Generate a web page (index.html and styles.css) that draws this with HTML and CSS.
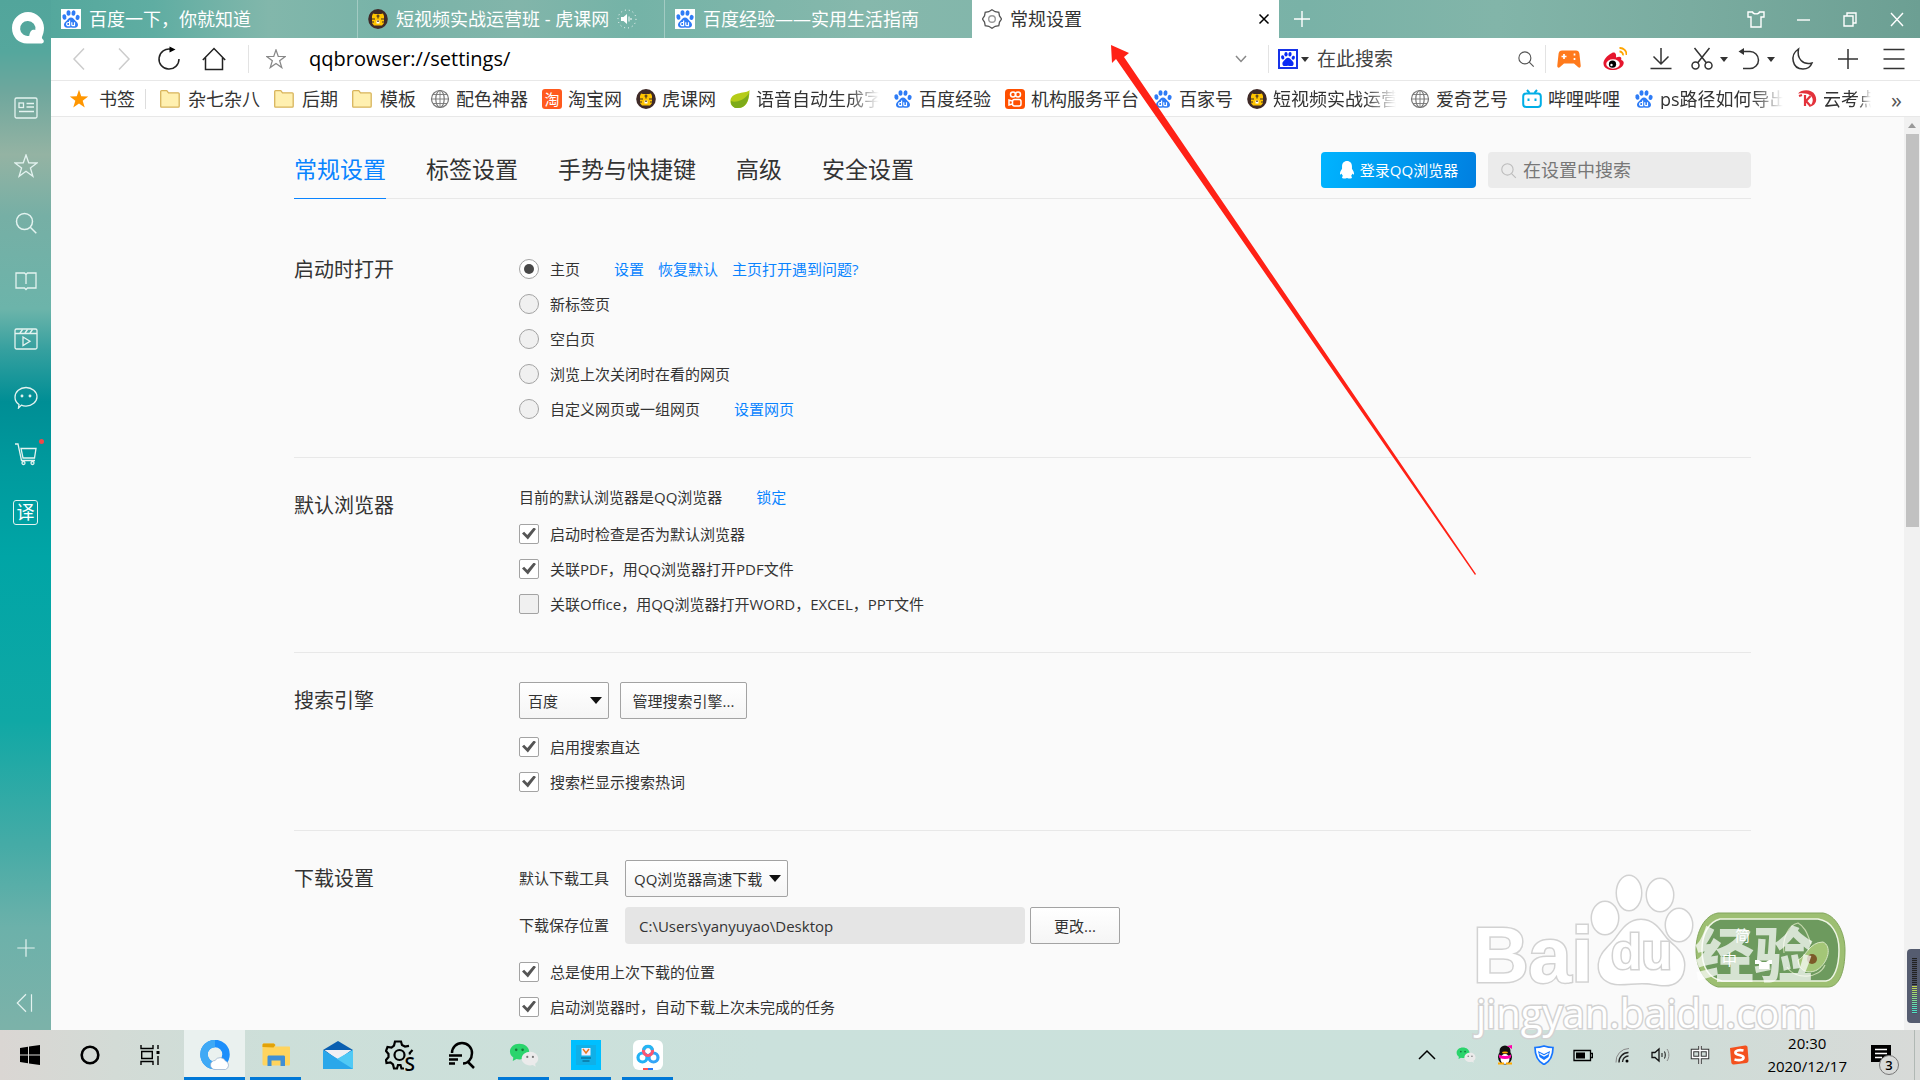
FILE: index.html
```html
<!DOCTYPE html>
<html lang="zh-CN">
<head>
  <meta charset="UTF-8" />
  <meta name="viewport" content="width=device-width, initial-scale=1.0" />
  <title>常规设置</title>
  <link rel="stylesheet" href="styles.css">
</head>
<body>
  <!-- shared icons -->
  <svg class="sprite" width="0" height="0" aria-hidden="true">
    <symbol id="paw" viewBox="0 0 20 20">
      <g fill="currentColor">
        <ellipse cx="3.4" cy="8" rx="2" ry="2.7" transform="rotate(-12 3.4 8)"/>
        <ellipse cx="7.5" cy="4" rx="2" ry="2.8"/>
        <ellipse cx="12.5" cy="4" rx="2" ry="2.8" transform="rotate(8 12.5 4)"/>
        <ellipse cx="16.6" cy="8.4" rx="2" ry="2.6" transform="rotate(14 16.6 8.4)"/>
        <path d="M10 8.4c2 0 3 1.6 4.2 3 1.300 1.400 3 2.500 2.800 4.700-.2 2-1.800 2.900-3.500 2.700-1.200-.1-2.200-.4-3.500-.4s-2.300.3-3.500.4c-1.700.2-3.300-.7-3.500-2.700-.2-2.200 1.500-3.300 2.800-4.700 1.200-1.400 2.200-3 4.200-3z"/>
      </g>
    </symbol>
    <symbol id="baidu" viewBox="0 0 20 20">
      <use href="#paw"/>
      <path d="M8.600 11.500v5.200H7.200a1.500 1.500 0 0 1 0-3.200h1.400M10.800 13.300v2.400c0 .7.4 1 1 1h1.700v-3.400" fill="none" stroke="#fff" stroke-width="1.200"/>
    </symbol>
    <symbol id="tiger" viewBox="0 0 20 20">
      <ellipse cx="10" cy="10" rx="9.800" ry="10" fill="#3f2a28"/>
      <path d="M5 4.500l2 .5h6l2-.500 1 2.500v7l-2 2.500H6L4 14V7z" fill="#ffc400"/>
      <path d="M10 5.500v4M8.500 7h3M4 10h3M13 10h3M4 13h2M14 13h2" stroke="#3f2a28" stroke-width="1.100"/>
      <rect x="8.500" y="11.500" width="3" height="3" fill="#fff"/>
      <rect x="9.300" y="11.500" width="1.400" height="1.500" fill="#3f2a28"/>
    </symbol>
    <symbol id="folder" viewBox="0 0 20 20">
      <path d="M.7 2.500c0-.6.3-.9.900-.9h5.200l1.700 2.200h9.800c.5 0 .9.400.9.900v12.600c0 .5-.4.900-.9.900H1.600c-.6 0-.9-.4-.9-.9z" fill="#fff0b0" stroke="#d8b45c" stroke-width="1.300"/>
    </symbol>
    <symbol id="globe" viewBox="0 0 20 20">
      <g fill="none" stroke="#777" stroke-width="1.200">
        <circle cx="10" cy="10" r="8.500"/><ellipse cx="10" cy="10" rx="4.200" ry="8.500"/>
        <path d="M10 1.500v17M1.500 10h17M3 5.500h14M3 14.500h14" stroke-width=".9"/>
      </g>
    </symbol>
    <symbol id="lens" viewBox="0 0 24 24">
      <g fill="none" stroke="currentColor" stroke-width="1.500"><circle cx="10.500" cy="10.500" r="8"/><path d="M16.300 16.300l6 6"/></g>
    </symbol>
    <symbol id="star" viewBox="0 0 24 24">
      <path d="M12 1l2.700 7.800 8.300.2-6.600 5 2.500 8.300L12 17.300l-6.900 5L7.600 14 1 9l8.300-.2z"/>
    </symbol>
    <symbol id="wechat" viewBox="0 0 32 26">
      <path d="M11 1C5.300 1 1 4.600 1 9.300c0 2.700 1.400 4.900 3.600 6.400L4 19.500l4-2.200c1 .2 2 .4 3 .4 5.600 0 10.500-3.700 10.500-8.400S16.700 1 11 1z" fill="#2bd46c"/>
      <circle cx="7.700" cy="7.500" r="1.400" fill="#167a3c"/><circle cx="14.500" cy="7.500" r="1.400" fill="#167a3c"/>
      <path d="M22.500 9.500c-5 0-9 3.300-9 7.300s4 7.300 9 7.300c1 0 2-.2 2.900-.4l3 1.800-.5-3.200c2-1.300 3.300-3.300 3.300-5.500 0-4-3.900-7.300-8.700-7.300z" fill="#ebebeb"/>
      <circle cx="19.500" cy="15" r="1.200" fill="#777"/><circle cx="25.500" cy="15" r="1.200" fill="#777"/>
    </symbol>
  </svg>

  <div class="desktop">
    <div class="browser">
      <aside class="sidebar">
        <a href="#" class="q-logo" aria-label="QQ浏览器">
          <svg width="34" height="34" viewBox="0 0 34 34"><path fill="#fff" fill-rule="evenodd" d="M17 1C8.500 1 1 8 1 17s6.500 15.500 15 15.500h14c3 0 3.500-2.500 2-4-.8-.8-1.300-1.500-1-2.500 1-2.500 2-5.500 2-9C33 8 25.500 1 17 1zm0 9a7.500 7.500 0 0 1 7.300 9c-2.300-1-5.300 0-6 5.800A7.500 7.500 0 1 1 17 10z"/></svg>
        </a>
        <nav class="side-nav">
          <a href="#" aria-label="资讯"><svg viewBox="0 0 24 24"><rect x="1" y="2" width="22" height="20" rx="1.500"/><rect x="5" y="7" width="4.500" height="4.500"/><path d="M12.500 7.500H20M12.500 11H20M5 15.500h15"/></svg></a>
          <a href="#" aria-label="收藏"><svg><use href="#star"/></svg></a>
          <a href="#" aria-label="搜索"><svg><use href="#lens"/></svg></a>
          <a href="#" aria-label="阅读"><svg viewBox="0 0 24 24"><path d="M2 4h8.500L12 5.500 13.500 4H22v15h-8.500L12 20.500 10.500 19H2zM12 5.500V15"/></svg></a>
          <a href="#" aria-label="视频"><svg viewBox="0 0 24 24"><rect x="1" y="2" width="22" height="20" rx="1.500"/><path d="M1 6.500h22M6 6l2.500-3.500M11 6l2.500-3.500M16 6l2.500-3.500M9 10l7 4.200-7 4.300z"/></svg></a>
          <a href="#" aria-label="聊天"><svg viewBox="0 0 24 24"><path d="M5 19.500c-2.500-1.700-4-4.300-4-7.200C1 6.800 6 2.500 12 2.500s11 4.300 11 9.300-5 9.300-11 9.300c-1.700 0-3.300-.3-4.700-.9L4.500 23z"/><circle cx="8" cy="11" r=".8"/><circle cx="16" cy="11" r=".8"/></svg></a>
          <a href="#" class="has-dot" aria-label="购物"><svg viewBox="0 0 24 24"><path d="M1 2h3l3.500 16.500H21M7 6.500h15L20.500 16H9z"/><circle cx="9.500" cy="21" r="1.500"/><circle cx="18.500" cy="21" r="1.500"/></svg></a>
          <a href="#"><span class="translate">译</span></a>
        </nav>
        <nav class="side-bottom">
          <a href="#" aria-label="添加"><svg viewBox="0 0 24 24"><path d="M12 2.500v19M2.500 12h19"/></svg></a>
          <a href="#" aria-label="收起"><svg viewBox="0 0 24 24"><path d="M12 2.500L2.500 12l9.500 9.500M18 2.500v19"/></svg></a>
        </nav>
      </aside>

      <div class="window">
        <header class="tabs">
          <div class="tab"><span class="fav"><svg><use href="#baidu"/></svg></span>百度一下，你就知道</div>
          <div class="tab"><svg class="fav-plain"><use href="#tiger"/></svg>短视频实战运营班 - 虎课网
            <svg class="sound" viewBox="0 0 20 20"><path d="M4 8h2.500L10 5v10l-3.500-3H4z" fill="#fff"/><path d="M12 7.500v5M14 9v2" stroke="#fff"/><circle cx="10" cy="10" r="9" fill="none" stroke="#fff" stroke-dasharray="1 3"/></svg>
          </div>
          <div class="tab"><span class="fav"><svg><use href="#baidu"/></svg></span>百度经验——实用生活指南</div>
          <div class="tab active">
            <svg class="fav-plain" viewBox="0 0 20 20" fill="none" stroke="#555"><path d="M10 .7l3.200 2 3.600.7.700 3.500 2 3.100-2 3.100-.7 3.500-3.600.7-3.200 2-3.200-2-3.600-.7-.7-3.500-2-3.100 2-3.100.7-3.500 3.600-.7z" stroke-width="1.300"/><circle cx="10" cy="10" r="3.300" stroke="#999" stroke-width="1.400"/></svg>常规设置
            <button class="tab-close" aria-label="关闭标签"><svg viewBox="0 0 12 12"><path d="M1.500 1.500l9 9M10.500 1.500l-9 9"/></svg></button>
          </div>
          <button class="new-tab" aria-label="新建标签"><svg viewBox="0 0 18 18"><path d="M9 1v16M1 9h16"/></svg></button>
          <div class="win-controls">
            <button aria-label="皮肤"><svg viewBox="0 0 18 18"><path d="M1 2h4.500c.5 2.500 6.500 2.500 7 0H17v5h-3v10H4V7H1z"/></svg></button>
            <button aria-label="最小化"><svg viewBox="0 0 18 18"><path d="M3 10h13"/></svg></button>
            <button aria-label="还原"><svg viewBox="0 0 18 18"><path d="M3 6h9v10H3zM6 6V3h9v10h-3"/></svg></button>
            <button aria-label="关闭"><svg viewBox="0 0 18 18"><path d="M3 3l12 13M15 3L3 16"/></svg></button>
          </div>
        </header>

        <div class="toolbar">
          <div class="nav-buttons">
            <button class="dim" aria-label="后退"><svg viewBox="0 0 24 24"><path d="M17 1.500L7 12l10 10.500"/></svg></button>
            <button class="dim" aria-label="前进"><svg viewBox="0 0 24 24"><path d="M7 1.500L17 12 7 22.500"/></svg></button>
            <button class="strong" aria-label="刷新"><svg viewBox="0 0 24 24"><path d="M14 2.300A10 10 0 1 0 22 12"/><path d="M12.500-.5v6l6-3z" fill="#000" stroke="none"/></svg></button>
            <button class="strong" aria-label="主页"><svg viewBox="0 0 24 24"><path d="M.8 13L12 1.500 23.200 13M3.500 10.500v12h17v-12"/></svg></button>
          </div>
          <div class="address">
            <svg class="addr-star"><use href="#star"/></svg>
            <input type="text" value="qqbrowser://settings/" aria-label="地址栏">
            <svg class="addr-arrow" viewBox="0 0 12 8"><path d="M1 1l5 5.500L11 1"/></svg>
          </div>
          <div class="web-search">
            <span class="engine"><svg><use href="#paw"/></svg></span><i class="caret"></i>
            <input type="text" placeholder="在此搜索" aria-label="在此搜索">
            <svg class="search-icon"><use href="#lens"/></svg>
          </div>
          <div class="tools">
            <button aria-label="游戏"><svg viewBox="0 0 24 24" class="solid"><path d="M5 3.500h14c2 0 3 1 3.400 3l1.300 12c.2 2-1.200 2.800-2.700 1.600l-4-3.600H7l-4 3.600C1.500 21.300.1 20.500.3 18.500l1.300-12c.4-2 1.400-3 3.400-3z" fill="#ff7a1c"/><path d="M4.500 9.500h5M7 7v5M17.500 6.500v2M17.500 11v2" stroke="#fff" stroke-width="1.700"/></svg></button>
            <button aria-label="微博"><svg viewBox="0 0 24 24" class="solid"><path d="M9 6C4 8.500 0 13 .5 17c.5 4.500 6 6.500 10.500 6 6-.6 10-4 9.700-7.500-.2-1.700-1.500-2.200-2.500-2.500.8-3-1.200-4.200-5.200-2.500.5-3-.5-6-4-4.500z" fill="#e6162d"/><ellipse cx="10" cy="17" rx="6.800" ry="4.700" fill="#fff"/><circle cx="9.500" cy="17.200" r="3.600" fill="#000"/><circle cx="8.500" cy="18" r="1.200" fill="#fff"/><path d="M16.500 1a6.500 6.500 0 0 1 7 7M16.500 4.500a3.500 3.500 0 0 1 3.500 3.800" stroke="#ffa500" stroke-width="1.800" fill="none"/></svg></button>
            <button aria-label="下载"><svg viewBox="0 0 24 24"><path d="M12 1v15.500M4.500 9.500l7.500 7.500 7.500-7.500M1.500 21.500h21"/></svg></button>
            <button aria-label="截图" class="wide"><svg viewBox="0 0 24 24"><path d="M4.500 1L16.500 16M19.500 1L7.500 16"/><circle cx="5.500" cy="18.500" r="3.500"/><circle cx="18.500" cy="18.500" r="3.500"/></svg><i class="caret"></i></button>
            <button aria-label="恢复"><svg viewBox="0 0 24 24"><path d="M5 4.500h8a8.500 8.500 0 0 1 0 17H6"/><path d="M7 1v7L1.500 4.500z" fill="#333" stroke="none"/></svg><i class="caret"></i></button>
            <button aria-label="夜间模式"><svg viewBox="0 0 24 24"><path d="M8.500 2C-.5 8 2 22 13 22c4 0 7.500-2 9-6C13 18.500 6.500 11.500 8.500 2z"/></svg></button>
            <button aria-label="添加"><svg viewBox="0 0 24 24"><path d="M12 2v20M2 12h20"/></svg></button>
            <button aria-label="菜单"><svg viewBox="0 0 24 24"><path d="M1.500 2.500h21M1.500 12h21M1.500 21.500h21"/></svg></button>
          </div>
        </div>

        <nav class="bookmarks">
          <a href="#" class="mark-home"><svg class="orange"><use href="#star"/></svg>书签</a>
          <a href="#" class="dir"><svg><use href="#folder"/></svg>杂七杂八</a>
          <a href="#" class="dir"><svg><use href="#folder"/></svg>后期</a>
          <a href="#" class="dir"><svg><use href="#folder"/></svg>模板</a>
          <a href="#"><svg><use href="#globe"/></svg>配色神器</a>
          <a href="#"><span class="taobao">淘</span>淘宝网</a>
          <a href="#"><svg><use href="#tiger"/></svg>虎课网</a>
          <a href="#"><svg viewBox="0 0 20 20"><path d="M19.500 1c-3 4-17 1-19 10-.7 4 2 7.500 6 8 9 1 13-6 13-18z" fill="#b5cc18"/><path d="M1 12c4 2 13 0 18-8-.5 9-4 16-13 15C2.500 18.500.500 15 1 12z" fill="#7dab1a"/></svg><span class="fade">语音自动生成字</span></a>
          <a href="#"><svg class="blue"><use href="#baidu"/></svg>百度经验</a>
          <a href="#"><svg viewBox="0 0 20 20"><rect width="20" height="20" rx="3.500" fill="#ff5000"/><g fill="none" stroke="#fff" stroke-width="1.500"><circle cx="8" cy="5.500" r="2.500"/><circle cx="13" cy="5.500" r="2.500"/><rect x="7.500" y="10.500" width="8.500" height="6.500" rx="2"/><path d="M7 12l-3-1v5l3-1"/></g></svg>机构服务平台</a>
          <a href="#"><svg class="blue"><use href="#baidu"/></svg>百家号</a>
          <a href="#"><svg><use href="#tiger"/></svg><span class="fade">短视频实战运营</span></a>
          <a href="#"><svg><use href="#globe"/></svg>爱奇艺号</a>
          <a href="#"><svg viewBox="0 0 20 20" fill="none" stroke="#00aee6" stroke-width="2"><rect x="1.200" y="4.500" width="17.600" height="13.500" rx="3"/><path d="M5 1l2.500 3M15 1l-2.500 3M6.500 9.500v2.500M13.500 9.500v2.500"/></svg>哔哩哔哩</a>
          <a href="#"><svg class="blue"><use href="#baidu"/></svg><span class="fade">ps路径如何导出</span></a>
          <a href="#"><svg viewBox="0 0 20 20"><path d="M1 4.500C5 0 15 0 18 6s0 11-6 12c4-3 5-8 2-11S6 4 1 4.500z" fill="#e3323b"/><path d="M8 6v11M13.500 7L9 12l4.500 5M2 7l3-1" stroke="#e3323b" stroke-width="2.200" fill="none"/></svg><span class="fade short">云考点</span></a>
          <button class="more" aria-label="更多书签">»</button>
        </nav>

        <div class="page">
          <main class="settings">
            <header class="settings-head">
              <nav class="settings-nav">
                <a href="#" class="current">常规设置</a>
                <a href="#">标签设置</a>
                <a href="#">手势与快捷键</a>
                <a href="#">高级</a>
                <a href="#">安全设置</a>
              </nav>
              <button class="login"><svg viewBox="0 0 16 20"><path d="M8 0c3.500 0 5.500 2.500 5.500 6v2.500c1.500 2 2.500 4.500 2.300 6-.3 1.200-1.300.3-1.800-.5-.2 1-.8 2-1.500 2.700 1.500.8 1.500 2.800-.8 2.800-1.500 0-2.700-.2-3.700-.7-1 .5-2.200.7-3.700.7-2.300 0-2.300-2-.8-2.800C2.800 16 2.200 15 2 14c-.5.800-1.500 1.700-1.800.5-.2-1.500.8-4 2.300-6V6C2.500 2.500 4.500 0 8 0z" fill="#fff"/></svg>登录QQ浏览器</button>
              <label class="find"><svg><use href="#lens"/></svg><input type="text" placeholder="在设置中搜索" aria-label="在设置中搜索"></label>
            </header>

            <section class="group first">
              <h2>启动时打开</h2>
              <div class="options">
                <div class="row"><label><input type="radio" name="startup" checked>主页</label><span class="links"><a href="#">设置</a><a href="#">恢复默认</a><a href="#">主页打开遇到问题?</a></span></div>
                <div class="row"><label><input type="radio" name="startup">新标签页</label></div>
                <div class="row"><label><input type="radio" name="startup">空白页</label></div>
                <div class="row"><label><input type="radio" name="startup">浏览上次关闭时在看的网页</label></div>
                <div class="row"><label><input type="radio" name="startup">自定义网页或一组网页</label><span class="links"><a href="#">设置网页</a></span></div>
              </div>
            </section>

            <section class="group">
              <h2>默认浏览器</h2>
              <div class="options">
                <div class="intro">目前的默认浏览器是QQ浏览器<span class="links"><a href="#">锁定</a></span></div>
                <div class="row"><label><input type="checkbox" checked>启动时检查是否为默认浏览器</label></div>
                <div class="row"><label><input type="checkbox" checked>关联PDF，用QQ浏览器打开PDF文件</label></div>
                <div class="row"><label><input type="checkbox">关联Office，用QQ浏览器打开WORD，EXCEL，PPT文件</label></div>
              </div>
            </section>

            <section class="group">
              <h2>搜索引擎</h2>
              <div class="options">
                <div class="controls">
                  <span class="select engine-select"><select aria-label="搜索引擎"><option>百度</option></select></span>
                  <button class="btn">管理搜索引擎...</button>
                </div>
                <div class="row"><label><input type="checkbox" checked>启用搜索直达</label></div>
                <div class="row"><label><input type="checkbox" checked>搜索栏显示搜索热词</label></div>
              </div>
            </section>

            <section class="group">
              <h2>下载设置</h2>
              <div class="options">
                <div class="field">
                  <label for="tool">默认下载工具</label>
                  <span class="select tool-select"><select id="tool"><option>QQ浏览器高速下载</option></select></span>
                </div>
                <div class="field">
                  <label for="path">下载保存位置</label>
                  <input type="text" id="path" value="C:\Users\yanyuyao\Desktop" readonly>
                  <button class="btn change">更改...</button>
                </div>
                <div class="row"><label><input type="checkbox" checked>总是使用上次下载的位置</label></div>
                <div class="row"><label><input type="checkbox" checked>启动浏览器时，自动下载上次未完成的任务</label></div>
              </div>
            </section>
          </main>
          <div class="scrollbar"><i class="up"></i><i class="thumb"></i></div>
        </div>
      </div>
    </div>

    <footer class="taskbar">
      <button class="sys" aria-label="开始"><svg width="20" height="20" viewBox="0 0 20 20"><path d="M0 3l8-1.200v7.700H0zM9 1.600L20 0v9.500H9zM0 10.500h8v7.700L0 17zM9 10.500h11V20L9 18.400z"/></svg></button>
      <button class="sys" aria-label="Cortana"><svg width="20" height="20" viewBox="0 0 20 20"><circle cx="10" cy="10" r="8.300" fill="none" stroke="#000" stroke-width="2.600"/></svg></button>
      <button class="sys" aria-label="任务视图"><svg width="20" height="20" viewBox="0 0 20 20" fill="none" stroke="#000" stroke-width="1.400"><path d="M1 0v3.500h12V0M1 20v-3.500h12V20M1.700 6.500h10.600v7H1.700zM18 0v4M18 11v9"/><path d="M18 6v3" stroke-width="3"/></svg></button>
      <div class="apps">
        <button class="on" aria-label="QQ浏览器"><svg viewBox="0 0 30 30"><circle cx="15" cy="14.500" r="11" fill="none" stroke="#1d8ffb" stroke-width="7.500"/><path d="M15 3.500A11 11 0 0 0 15 25.500" fill="none" stroke="#3fa9f5" stroke-width="7.500"/><path d="M15 29.500a4.500 4.500 0 0 1 0-9 6 6 0 0 1 10.500.5 4.500 4.500 0 0 1 0 8.500z" fill="#fff" stroke="#8fa9c9" stroke-width=".7"/></svg></button>
        <button class="open" aria-label="文件资源管理器"><svg viewBox="0 0 30 30"><path d="M1.500 5c0-1 .5-1.500 1.500-1.500h10l1.500 3H28c.7 0 1 .4 1 1V24c0 1-.5 1.500-1.500 1.500h-24c-1.300 0-2-.7-2-1.500z" fill="#ffd45e"/><path d="M1.500 7V5c0-1 .5-1.500 1.500-1.500h10l1.500 1.500-2 2.500z" fill="#e2a208"/><path d="M6.500 26V17c0-1 .6-1.500 1.500-1.500h14.500c1 0 1.500.5 1.500 1.500v9h-4.500v-5.500h-9V26z" fill="#3f8fd6"/></svg></button>
        <button aria-label="邮件"><svg viewBox="0 0 30 30"><path d="M0 10L15 1l15 9-15 11z" fill="#0a5fb0"/><path d="M1.500 10h27L15 20z" fill="#f0f0f4"/><path d="M0 10l15 9 15-9v19H0z" fill="#2aa7ea"/><path d="M30 10v19L14 19z" fill="#50c9f5"/></svg></button>
        <button aria-label="设置"><svg viewBox="0 0 30 30" fill="none" stroke="#000" stroke-width="2.200"><circle cx="14.500" cy="15" r="5"/><path d="M19 28.500h-2.500L15.500 25H13l-1 3.500H9l-1-4-2.500-2-4 .5L1 20l2.500-3v-3L1 11l1.500-4 4 .5L9 5.500 10 1.500h6l1 3.500 3 1.500 4-.7M27.500 10l-2.800 3 .3 1.500"/></svg><span class="s-mark">S</span></button>
        <button aria-label="搜索"><svg viewBox="0 0 30 30" fill="none" stroke="#000" stroke-width="2.500"><path d="M5 13A10 10 0 0 1 25 13c0 6-4 10.500-9 10.500M20.500 21.500l6.500 6.500M2 15.500h13M2 19.500h9M2 23.500h6"/></svg></button>
        <button class="open" aria-label="微信"><svg><use href="#wechat"/></svg></button>
        <button class="open" aria-label="应用"><svg viewBox="0 0 30 30"><path fill="#00bfff" d="M0 0h30v30H0z"/><path fill="#0fb0e8" d="M5 5h20v20H5z"/><path fill="#eef" d="M10.500 8h9v7.500h-9z"/><path d="M12 9l3 4 3-4" stroke="#e87a20" fill="none" stroke-width="1.500"/><path d="M10 18h10M11.500 21h7" stroke="#075b80"/></svg></button>
        <button class="open" aria-label="网盘"><svg viewBox="0 0 30 30"><rect width="30" height="30" rx="6" fill="#fff"/><g fill="none" stroke-width="3.200"><circle cx="9.500" cy="17.500" r="4.500" stroke="#22b2f5"/><circle cx="20.500" cy="17.500" r="4.500" stroke="#35a5f7"/><circle cx="15" cy="11" r="4.500" stroke="#ff5470"/><path d="M10.600 10a4.500 4.500 0 0 1 8.800 0" stroke="#25b7f5"/></g><path fill="#f55" d="M10 28h5v2h-5z"/><path fill="#2a7df5" d="M15 28h5v2h-5z"/></svg></button>
      </div>
      <div class="tray">
        <svg viewBox="0 0 20 20" fill="none" stroke="#000" stroke-width="1.500"><path d="M2 14l8-8 8 8"/></svg>
        <svg><use href="#wechat"/></svg>
        <svg viewBox="0 0 20 20"><ellipse cx="10" cy="12" rx="7" ry="7.500" fill="#111"/><circle cx="10" cy="6" r="5.500" fill="#111"/><ellipse cx="10" cy="14" rx="4.500" ry="5" fill="#fff"/><path d="M4 9.500c4 2 8 2 12 0v3c-4 2-8 2-12 0zM12 1l5-1v4z" fill="#f0a"/><ellipse cx="10" cy="7.500" rx="3" ry="1" fill="#fa0"/><path d="M3 18.500h6M11 18.500h6" stroke="#fa0" stroke-width="2"/></svg>
        <svg viewBox="0 0 20 20"><path d="M10 1c3 1 6 1.500 9 1.500C19 10 17 16 10 19.500 3 16 1 10 1 2.500 4 2.500 7 2 10 1z" fill="#fff" stroke="#1676ff" stroke-width="1.700"/><path d="M4 6l6 3 6-3-1.500 6L10 15l-4.500-3z" fill="#1676ff"/><path d="M5.500 8.500l4.500 2.500 4.500-2.500" fill="none" stroke="#fff" stroke-width="1.300"/></svg>
        <svg viewBox="0 0 20 20"><path d="M1 5.500h16.500v10H1zM18 8.500h1.500v4H18" fill="none" stroke="#000" stroke-width="1.300"/><path d="M3 7.500h9v6H3z"/></svg>
        <svg viewBox="0 0 20 20" fill="none" stroke="#222"><circle cx="15" cy="16" r="1.500" fill="#000" stroke="none"/><path d="M10.500 17a6 6 0 0 1 6-6M7 17.500A9.500 9.500 0 0 1 16.500 7.500" stroke-width="1.400"/><path d="M4 17.500A13 13 0 0 1 17 3.500" stroke="#888"/></svg>
        <svg viewBox="0 0 20 20" fill="none" stroke="#111"><path d="M1 7.500h3L8 4v12l-4-3.500H1z" stroke-width="1.300"/><path d="M11 8v4M13.500 6.500c1 2 1 5 0 7"/><path d="M16 4c2.500 3.500 2.500 8.500 0 12" stroke="#888"/></svg>
        <svg viewBox="0 0 20 20" fill="none"><path d="M2.500 5.500h15v7h-15zM10 1v18" stroke="#333" stroke-width="3.500"/><path d="M2.500 5.500h15v7h-15zM10 1v18" stroke="#fff" stroke-width="1.500"/></svg>
        <svg viewBox="0 0 20 20"><path d="M1 3l15-2.500c1.500 0 2.200.5 2.500 1.500l1 13c0 1.500-.5 2.500-2 3L5 19.500c-1.500 0-2.500-.5-2.700-2z" fill="#f4511e"/><path d="M14.500 5.500C10 4.500 6 5.500 6.500 8s8 1.500 8 4.500-5 3-9 2" fill="none" stroke="#fff" stroke-width="2.700"/></svg>
      </div>
      <div class="clock"><span>20:30</span><span>2020/12/17</span></div>
      <button class="notice" aria-label="通知"><svg viewBox="0 0 20 20"><path d="M0 0h20v17h-7l-4 3v-3H0z"/><path d="M4 4.500h12M4 8.500h12M4 12.500h7" stroke="#fff" stroke-width="1.300"/></svg><span>3</span></button>
    </footer>

    <!-- volume meter docked to the screen edge -->
    <div class="meter"><i></i></div>

    <svg class="watermark" viewBox="0 0 400 180" aria-hidden="true">
      <g class="wm-outline">
        <text x="3" y="114" class="wm-bold">Bai</text>
        <ellipse cx="135" cy="50" rx="13" ry="16"/><ellipse cx="159" cy="25" rx="12" ry="17"/><ellipse cx="190" cy="27" rx="13" ry="16"/><ellipse cx="209" cy="57" rx="13" ry="16"/>
        <path d="M171 52c12 0 18 9 24 17 7 9 19 14 19 28 0 15-10 21-22 20-8-1-12-2-20-2s-14 1-22 1c-13 0-22-7-21-20 1-12 12-18 18-27 6-8 12-17 24-17z"/>
        <text x="141" y="101" class="wm-du">du</text>
      </g>
      <path d="M248 45h105c12 2 22 18 22 37 0 22-6 37-17 37h-110c-12-3-22-18-22-37s9-35 22-37z" fill="#9dbf72" stroke="#82a65c"/>
      <path d="M250 51h98c13 2 21 14 21 31s-5 30-13 31H252c-13-3-20-14-20-31s7-28 18-31z" fill="#6d9a5e" stroke="#eef5e4" stroke-width="1.500"/>
      <g fill="none" stroke="#c5d8ad" stroke-width="1.200"><path d="M314 85c-2-14 4-28 14-30 6 3 9 9 13 21M317 99c8 13 32 12 38-2"/></g>
      <path d="M328 92c8-3 11-18 25-18 9 4 6 20-6 28-8 4-18 2-19-10z" fill="#a3c677" stroke="#d9e8c5"/><circle cx="342" cy="91" r="5" fill="#7c5a28"/>
      <text x="225" y="109" class="wm-cjk">经验</text>
      <text x="265" y="73" class="wm-small">简</text><text x="252" y="97" class="wm-small">中</text>
      <path d="M285 92h4l3 2h4l3-2h3v4h-3v5h-10v-5h-4z" fill="#fff"/>
      <text x="6" y="160" class="wm-url">jingyan.baidu.com</text>
    </svg>

    <svg class="arrow" viewBox="0 0 366 532" aria-hidden="true"><path d="M0 0l18 8-5 4 352 517-1 1L5 14l-4 4z" fill="#ff2116"/></svg>
  </div>
</body>
</html>
```

FILE: styles.css
```css
* {
  box-sizing: border-box;
}
body {
  margin: 0;
  font-family: "Open Sans", "Noto Sans CJK SC", sans-serif;
  font-size: 15px;
  line-height: 20px;
  color: #333;
}
a {
  color: inherit;
  text-decoration: none;
}
button, input, select {
  font: inherit;
  color: inherit;
}
button {
  padding: 0;
  border: 0;
  background: none;
}
svg {
  flex: none;
}
.sprite {
  position: absolute;
}
.desktop {
  position: relative;
  display: flex;
  flex-direction: column;
  height: 100vh;
  overflow: hidden;
}
.browser {
  flex: 1;
  display: flex;
  min-height: 0;
  background: linear-gradient(90deg, #4fa59a 0%, #5fada2 8%, #82b7ab 14%, #78b3a8 20%, #82b5aa 27%, #74b3a7 33%, #86b8ac 45%, #79b2a7 68%, #82b5a9 78%, #7aaca0 88%, #6c9f93 100%);
}

/* sidebar */
.sidebar {
  display: flex;
  flex-direction: column;
  width: 51px;
  background: linear-gradient(#52a59b 0%, #55a79d 5%, #6fa79d 9%, #94b3a3 15%, #76afa5 21%, #6cb4aa 30%, #35a09f 34%, #008e95 39%, #009b9e 46%, #00a5a6 54%, #10a8a5 70%, #45aba6 82%, #6cb1aa 90%, #7cb2a9 100%);
}
.q-logo {
  display: flex;
  justify-content: center;
  padding: 11px 0 0 4px;
  height: 79px;
}
.side-nav {
  display: flex;
  flex-direction: column;
  height: 462px;
}
.side-nav a {
  flex: 1;
}
.side-nav a, .side-bottom a {
  display: flex;
  align-items: center;
  justify-content: center;
  position: relative;
}
.side-bottom {
  margin-top: auto;
}
.side-bottom a {
  height: 55px;
}
.side-nav svg, .side-bottom svg {
  width: 24px;
  height: 24px;
  fill: none;
  stroke: #e4f3f0;
  stroke-width: 1.3;
  color: #e4f3f0;
}
.side-bottom svg {
  width: 22px;
  height: 22px;
}
.has-dot::after {
  content: "";
  position: absolute;
  top: 13px;
  right: 7px;
  width: 5px;
  height: 5px;
  border-radius: 50%;
  background: #f04848;
}
.translate {
  width: 25px;
  height: 25px;
  border: 1px solid #e4f3f0;
  border-radius: 3px;
  color: #fff;
  font-size: 18px;
  line-height: 22px;
  text-align: center;
}

/* tabs */
.window {
  flex: 1;
  display: flex;
  flex-direction: column;
  min-width: 0;
}
.tabs {
  display: flex;
  height: 38px;
  color: #fff;
  font-size: 18px;
}
.tab {
  display: flex;
  align-items: center;
  gap: 8px;
  flex: 0 1 307px;
  padding-left: 10px;
  border-right: 1px solid #a3cbc3;
  white-space: nowrap;
}
.tab:nth-child(3) {
  border-right: 0;
}
.tab.active {
  background: #fff;
  color: #333;
  border: 0;
}
.fav {
  width: 20px;
  height: 20px;
  background: #fff;
}
.fav svg {
  display: block;
  width: 20px;
  height: 20px;
  color: #2e7cf6;
}
.fav-plain, .sound {
  width: 20px;
  height: 20px;
}
.tab-close {
  display: flex;
  margin: 0 9px 0 auto;
}
.tab-close svg {
  width: 12px;
  height: 12px;
  stroke: #000;
  stroke-width: 1.5;
}
.new-tab {
  display: flex;
  align-items: center;
  justify-content: center;
  width: 46px;
}
.new-tab svg, .win-controls svg {
  width: 18px;
  height: 18px;
  fill: none;
  stroke: #fff;
  stroke-width: 1.4;
}
.win-controls {
  display: flex;
  margin-left: auto;
}
.win-controls button {
  display: flex;
  align-items: center;
  justify-content: center;
  width: 47px;
}

/* toolbar */
.toolbar {
  display: flex;
  align-items: center;
  height: 43px;
  background: #fff;
  border-bottom: 1px solid #e8e8e8;
}
.nav-buttons {
  display: flex;
  padding: 0 12px 0 5px;
}
.nav-buttons button {
  width: 45px;
  height: 24px;
}
.toolbar svg {
  width: 24px;
  height: 24px;
  fill: none;
  stroke: #333;
  stroke-width: 1.5;
}
.toolbar .dim svg {
  stroke: #ccc;
}
.toolbar .strong svg {
  overflow: visible;
  stroke: #222;
}
.address, .web-search {
  display: flex;
  align-items: center;
  height: 28px;
  border-left: 1px solid #e3e3e3;
}
.address {
  flex: 1;
  padding: 0 21px 0 17px;
}
.toolbar .addr-star {
  width: 20px;
  height: 20px;
  stroke: #888;
}
.address input {
  flex: 1;
  margin-left: 23px;
  padding: 0;
  border: 0;
  outline: 0;
  color: #000;
  font-size: 20px;
  line-height: 28px;
}
.toolbar .addr-arrow {
  width: 12px;
  height: 8px;
  stroke: #888;
}
.web-search {
  width: 278px;
  padding: 0 10px 0 9px;
  border-right: 1px solid #e3e3e3;
}
.engine {
  width: 20px;
  height: 20px;
  border: 2px solid #1733e8;
}
.engine svg {
  display: block;
  width: 16px;
  height: 16px;
  color: #0a2af5;
  stroke: none;
}
.caret {
  flex: none;
  border: 4px solid transparent;
  border-top: 5px solid #333;
  border-bottom: 0;
}
.engine + .caret {
  margin: 0 8px 0 3px;
}
.web-search input {
  flex: 1;
  min-width: 0;
  padding: 0;
  border: 0;
  outline: 0;
  font-size: 19px;
  line-height: 28px;
}
.web-search input::placeholder {
  color: #444;
}
.toolbar .search-icon {
  width: 18px;
  height: 18px;
  color: #555;
  stroke: none;
}
.tools {
  display: flex;
  padding-right: 3px;
}
.tools button {
  display: flex;
  align-items: center;
  justify-content: center;
  gap: 6px;
  width: 46px;
}
.tools .wide {
  width: 49px;
}
.tools .solid {
  stroke: none;
}

/* bookmarks */
.bookmarks {
  display: flex;
  align-items: center;
  gap: 14px;
  height: 36px;
  padding: 0 18px 0 18px;
  background: #fff;
  border-bottom: 1px solid #e8e8e8;
  font-size: 18px;
  white-space: nowrap;
}
.bookmarks a {
  display: flex;
  align-items: center;
  gap: 6px;
}
.bookmarks svg {
  width: 20px;
  height: 20px;
}
.bookmarks .dir {
  gap: 8px;
}
.bookmarks .mark-home {
  gap: 10px;
  padding-right: 10px;
  border-right: 1px solid #ddd;
}
.orange {
  fill: #ff9600;
}
.blue {
  color: #2e7cf6;
}
.taobao {
  width: 20px;
  border-radius: 3px;
  background: #ff5a1e;
  color: #fff;
  font-size: 15px;
  text-align: center;
}
.fade {
  width: 123px;
  overflow: hidden;
  -webkit-mask-image: linear-gradient(90deg, #000 75%, transparent);
  mask-image: linear-gradient(90deg, #000 75%, transparent);
}
.fade.short {
  width: 48px;
}
.more {
  margin-left: auto;
  font-size: 22px;
  color: #555;
}

/* settings page */
.page {
  flex: 1;
  display: flex;
  min-height: 0;
  background: #fafafa;
}
.settings {
  flex: 1;
  padding: 0 153px 0 243px;
}
.settings-head {
  display: flex;
  height: 82px;
  border-bottom: 1px solid #e8e8e8;
}
.settings-nav {
  display: flex;
  gap: 40px;
  margin-right: auto;
  font-size: 23px;
}
.settings-nav a {
  height: 82px;
  padding-top: 24px;
  line-height: 57px;
}
.settings-nav .current {
  color: #0a84ff;
  border-bottom: 1px solid #0a84ff;
}
.login, .find {
  display: flex;
  align-items: center;
  height: 36px;
  margin-top: 35px;
  border-radius: 4px;
}
.login {
  justify-content: center;
  gap: 5px;
  width: 155px;
  margin-right: 12px;
  background: linear-gradient(100deg, #00b4ff, #007fe0);
  color: #fff;
}
.login svg {
  width: 16px;
  height: 18px;
}
.find {
  gap: 6px;
  width: 263px;
  padding: 0 12px;
  background: #ebebeb;
}
.find svg {
  width: 17px;
  height: 17px;
  color: #bbb;
}
.find input {
  width: 100%;
  padding: 0;
  border: 0;
  background: none;
  font-size: 18px;
}
.find input::placeholder {
  color: #777;
}
.group {
  display: grid;
  grid-template-columns: 225px 1fr;
  padding: 29px 0 31px;
}
.group + .group {
  border-top: 1px solid #e8e8e8;
}
.group.first {
  padding-top: 52px;
}
.group h2 {
  margin: 0;
  font-size: 20px;
  font-weight: 400;
  line-height: 38px;
}
.row {
  display: flex;
  align-items: center;
  height: 35px;
}
.row label {
  display: flex;
  align-items: center;
  gap: 11px;
}
.intro {
  display: flex;
  margin-bottom: 9px;
}
.links {
  display: flex;
  gap: 14px;
  margin-left: 34px;
  color: #0a84ff;
}
.row input {
  appearance: none;
  display: grid;
  place-items: center;
  width: 20px;
  height: 20px;
  margin: 0;
  border: 1px solid #a3a3a3;
  background: #f0f0f0;
}
.row input:checked {
  background: #fff;
}
input[type="radio"] {
  border-radius: 50%;
}
input[type="radio"]:checked::before {
  content: "";
  width: 10px;
  height: 10px;
  border-radius: 50%;
  background: #484848;
}
input[type="checkbox"] {
  border-radius: 2px;
}
input[type="checkbox"]:checked::before {
  content: "";
  width: 14px;
  height: 12px;
  background: #555;
  clip-path: polygon(0 50%, 15% 36%, 38% 62%, 84% 0, 100% 12%, 42% 100%);
}
.controls, .field {
  display: flex;
  gap: 11px;
  margin-bottom: 10px;
}
.field {
  gap: 5px;
}
.field label {
  width: 101px;
  line-height: 37px;
}
.select {
  position: relative;
}
.select::after {
  content: "";
  position: absolute;
  top: 15px;
  right: 7px;
  border: 6px solid transparent;
  border-top: 7px solid #111;
  border-bottom: 0;
  pointer-events: none;
}
.select select {
  appearance: none;
  width: 100%;
  height: 37px;
  padding: 0 8px;
}
.engine-select {
  width: 90px;
}
.tool-select {
  width: 163px;
}
.select select, .btn {
  border: 1px solid #a3a3a3;
  border-radius: 2px;
  background: linear-gradient(#fff, #f5f5f5);
}
.btn {
  width: 127px;
  height: 37px;
}
.change {
  width: 90px;
}
#path {
  width: 400px;
  height: 37px;
  padding: 0 14px;
  border: 0;
  border-radius: 4px;
  background: #e5e5e5;
}
.scrollbar {
  display: flex;
  flex-direction: column;
  align-items: center;
  width: 16px;
  background: #f1f1f1;
}
.scrollbar .up {
  margin: 6px 0;
  border: 4px solid transparent;
  border-top: 0;
  border-bottom: 5px solid #999;
}
.scrollbar .thumb {
  width: 13px;
  height: 43%;
  background: #c1c1c1;
}

/* taskbar */
.taskbar {
  display: flex;
  height: 50px;
  background: linear-gradient(90deg, #dad6d3 0%, #d3dbd6 6%, #cddfd9 14%, #cbe1dc 40%, #cbe1db 75%, #cfdcd7 88%, #d8dad8 100%);
}
.taskbar button {
  display: flex;
  align-items: center;
  justify-content: center;
  position: relative;
}
.taskbar .sys {
  width: 60px;
}
.apps {
  display: flex;
  margin-left: 4px;
}
.apps button {
  width: 62px;
}
.apps svg {
  width: 30px;
  height: 30px;
}
.apps .on {
  width: 61px;
  background: #eaf1ef;
}
.apps .open::after, .apps .on::after {
  content: "";
  position: absolute;
  bottom: 0;
  left: 5px;
  right: 6px;
  height: 3px;
  background: #0078d7;
}
.apps .on::after {
  left: 0;
  right: 0;
}
.s-mark {
  position: absolute;
  right: 16px;
  bottom: 6px;
  font-size: 19px;
  font-weight: 600;
  color: #000;
}
.tray {
  display: flex;
  align-items: center;
  gap: 19px;
  margin-left: auto;
  padding-right: 18px;
}
.tray svg {
  width: 20px;
  height: 20px;
}
.clock {
  display: flex;
  flex-direction: column;
  align-items: center;
  padding-top: 2px;
  line-height: 23px;
  color: #000;
}
.notice {
  width: 68px;
  margin-right: 5px;
  border-right: 1px solid #b0b8b4;
}
.notice svg {
  width: 20px;
  height: 20px;
}
.notice span {
  position: absolute;
  right: 15px;
  bottom: 5px;
  width: 20px;
  height: 20px;
  border: 1px solid #777;
  border-radius: 50%;
  background: #d8dad8;
  color: #000;
  font-size: 13px;
  font-weight: 600;
  line-height: 18px;
  text-align: center;
}

/* overlays */
.meter {
  position: absolute;
  right: 0;
  bottom: 57px;
  width: 13px;
  height: 74px;
  padding: 9px 3px 9px 5px;
  border-radius: 4px 0 0 4px;
  background: #555c70;
}
.meter i {
  display: block;
  height: 100%;
  background: repeating-linear-gradient(transparent 0 1px, #4c5265 1px 2px), linear-gradient(#222 0 48%, #c8d84a 50%, #52e0c0 90%);
}
.watermark {
  position: absolute;
  right: 50px;
  bottom: 32px;
  width: 400px;
  height: 180px;
  pointer-events: none;
}
.watermark text {
  font-family: "Liberation Sans", "Noto Sans CJK SC", sans-serif;
}
.wm-outline, .wm-url {
  fill: #fff;
  stroke: #d2d2d2;
  stroke-width: 3px;
  paint-order: stroke;
}
.wm-bold {
  font-size: 77px;
  font-weight: 700;
}
.wm-du {
  font-size: 50px;
  font-weight: 700;
}
.wm-cjk {
  font-size: 59px;
  font-weight: 900;
  fill: #fff;
  fill-opacity: 0.72;
}
.wm-small {
  font-size: 15px;
  fill: #fff;
}
.watermark .wm-url {
  font-family: "Open Sans", sans-serif;
  font-size: 40px;
}
.arrow {
  position: absolute;
  top: 45px;
  left: 1111px;
  width: 366px;
  height: 532px;
  pointer-events: none;
}
```
